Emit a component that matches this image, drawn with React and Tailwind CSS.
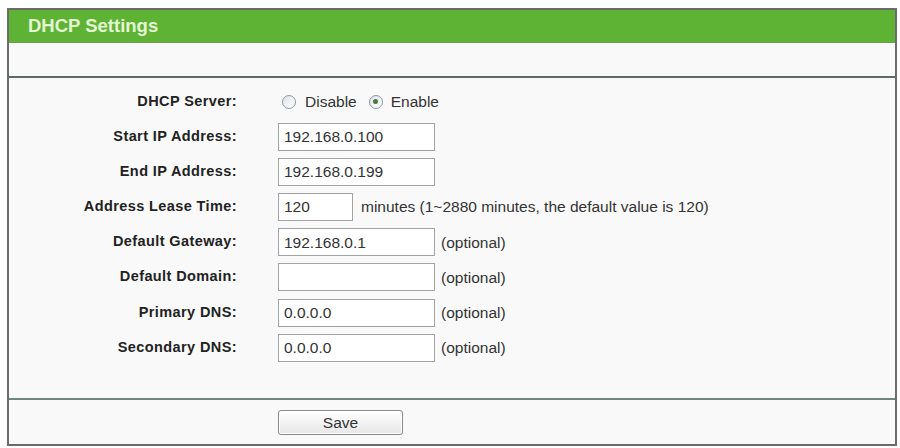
import React from "react";

const ROWS = [
  { label: "Start IP Address:", value: "192.168.0.100" },
  { label: "End IP Address:", value: "192.168.0.199" },
  { label: "Address Lease Time:", value: "120", short: true, note: "minutes (1~2880 minutes, the default value is 120)" },
  { label: "Default Gateway:", value: "192.168.0.1", note: "(optional)" },
  { label: "Default Domain:", value: "", note: "(optional)" },
  { label: "Primary DNS:", value: "0.0.0.0", note: "(optional)" },
  { label: "Secondary DNS:", value: "0.0.0.0", note: "(optional)" },
];

function Radio({ checked }) {
  return (
    <span className="flex h-[14px] w-[14px] items-center justify-center rounded-full border border-[#8d99a6] bg-gradient-to-br from-[#dfe3e8] to-white">
      {checked && <span className="h-[5px] w-[5px] rounded-full bg-[#4a7a3a]" />}
    </span>
  );
}

export default function App() {
  return (
    <div className="h-[448px] w-[900px] bg-white pl-[7px] pt-[8px] text-[#222]" style={{ fontFamily: '"Liberation Sans", Arial, sans-serif' }}>
      <div className="flex h-[438px] w-[890px] flex-col border-2 border-[#6b6b6b] bg-[#f9f9f9]">
        <div className="flex h-[33px] items-center border-b border-[#6f9a4f] bg-[#5fb334] pl-[19px] text-[18.5px] font-bold text-[#e4f6d2]">
          DHCP Settings
        </div>
        <div className="h-[35px] border-b-2 border-[#5d6b68]" />

        <div className="flex flex-1 flex-col pt-[6px]">
          <div className="flex h-[35px] items-center">
            <div className="w-[228px] text-right text-[14.5px] font-bold tracking-[0.4px]">DHCP Server:</div>
            <div className="flex items-center pl-[45px] text-[15.5px] text-[#333]">
              <Radio />
              <span className="ml-[9px]">Disable</span>
              <span className="ml-[12px]"><Radio checked /></span>
              <span className="ml-[8px]">Enable</span>
            </div>
          </div>
          {ROWS.map((row) => (
            <div key={row.label} className="flex h-[35.2px] items-center">
              <div className="w-[228px] text-right text-[14.5px] font-bold tracking-[0.4px]">{row.label}</div>
              <div className="flex items-center pl-[41px] text-[15.5px] text-[#333]">
                <div className={`flex h-[28px] items-center border border-[#a3a3a3] bg-white pl-[5px] text-[15.5px] ${row.short ? "w-[75px]" : "w-[157px]"}`}>
                  {row.value}
                </div>
                {row.note && <span className={row.short ? "ml-[8px]" : "ml-[6px]"}>{row.note}</span>}
              </div>
            </div>
          ))}
        </div>

        <div className="flex h-[46px] items-center border-t-2 border-[#70857f]">
          <div className="w-[269px]" />
          <button type="button" className="h-[25px] w-[125px] rounded-[3px] border border-[#8a8a8a] bg-gradient-to-b from-white to-[#e6e6e6] text-[15.5px] text-[#333] shadow-[inset_0_0_0_1px_#fff]">
            Save
          </button>
        </div>
      </div>
    </div>
  );
}
